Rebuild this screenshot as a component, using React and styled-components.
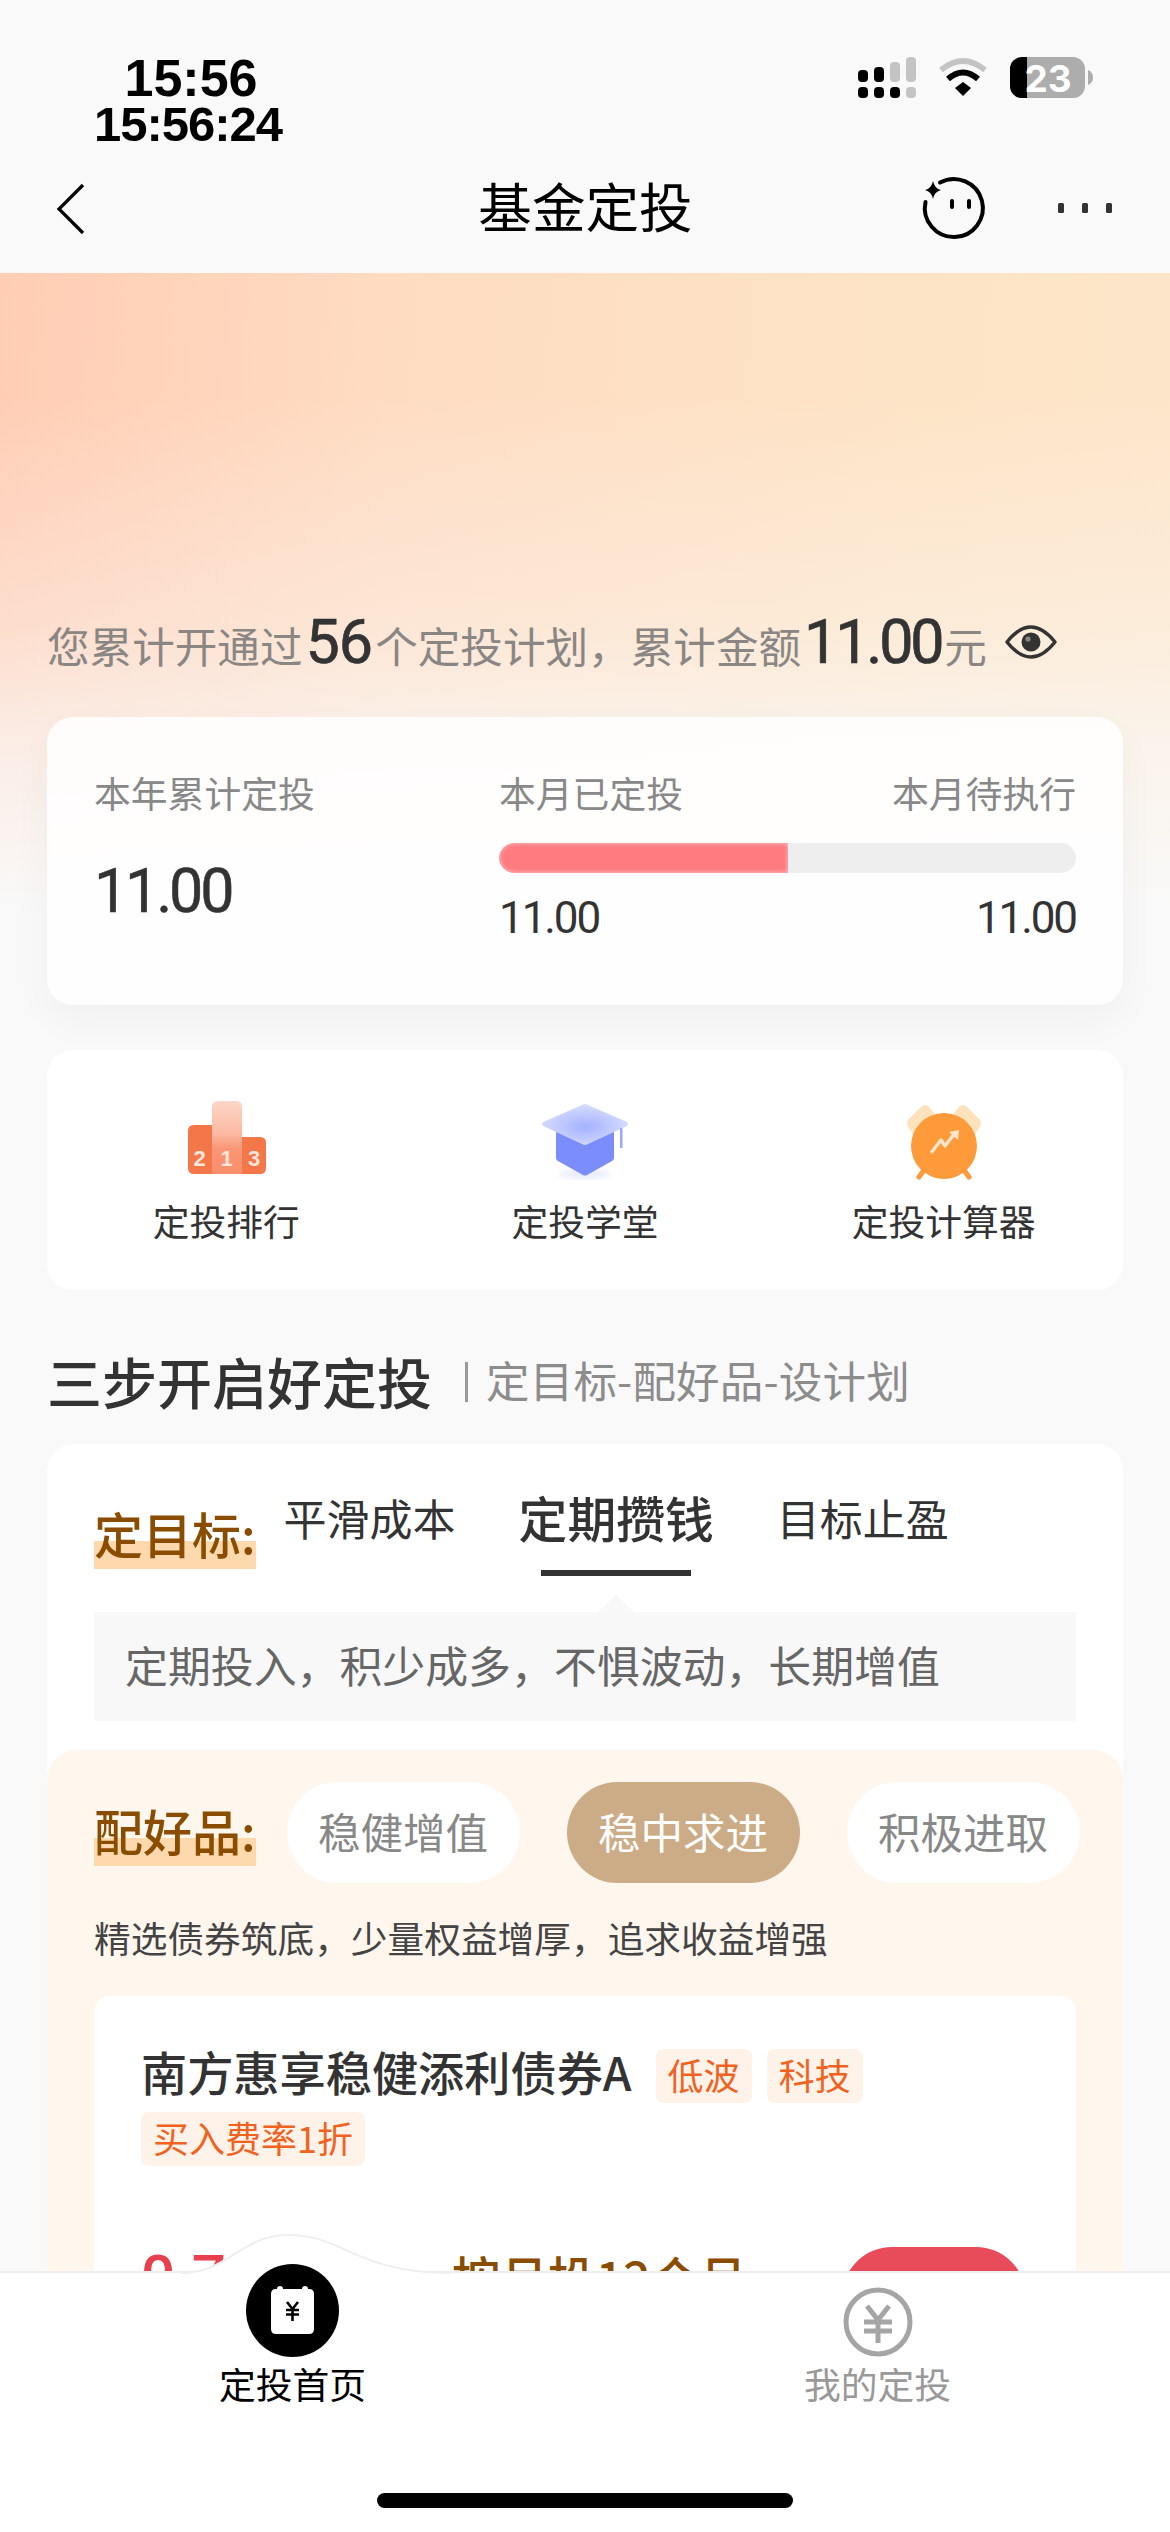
import React from "react";
import styled, { createGlobalStyle } from "styled-components";

const Global = createGlobalStyle`
  html, body { margin: 0; padding: 0; background: #f9f9f9; }
  * { box-sizing: border-box; }
  body { font-family: "Noto Sans CJK SC", "Noto Sans", sans-serif; color: #333; }
`;

const Page = styled.div`
  width: 1170px; height: 2532px; display: flex; flex-direction: column;
  overflow: hidden; background: #f9f9f9;
`;
const StatusBar = styled.div`
  height: 160px; padding: 55px 77px 0 93px; display: flex; justify-content: space-between; align-items: flex-start;
`;
const Clock = styled.div`
  width: 190px; text-align: center; font-family: "Liberation Sans", sans-serif; font-weight: 700; color: #000;
`;
const ClockLine = styled.div`
  font-size: ${p => p.$size}px; letter-spacing: ${p => p.$ls}px; padding-left: ${p => p.$shift}px; line-height: 46px; white-space: nowrap; display: flex; justify-content: center;
`;
const StatusIcons = styled.div`
  display: flex; gap: 22px; align-items: flex-start; margin-top: 2px;
`;
const NavBar = styled.div`
  height: 113px; padding: 0 58px 20px 56px; display: grid; grid-template-columns: 1fr auto 1fr; align-items: center;
`;
const BackSvg = styled.svg`
  display: block; margin-top: 4px;
`;
const NavTitle = styled.div`
  font-size: 53.6px; line-height: 70px; color: #000; font-weight: 400; margin: -3px 0 0 3px;
`;
const NavRight = styled.div`
  display: flex; justify-content: flex-end; align-items: center; gap: 69px; margin-top: 2px;
`;
const Scroll = styled.div`
  flex: 1; min-height: 0; overflow: hidden; padding: 327px 47px 0;
  background:
    linear-gradient(to bottom, rgba(249,249,249,0) 120px, rgba(249,249,249,.35) 350px, rgba(249,249,249,.7) 470px, #f9f9f9 640px),
    linear-gradient(95deg, #ffcdb4 0%, #fedcc2 30%, #fde4c6 70%, #fde6cb 100%);
`;
const Summary = styled.div`
  height: 84px; display: flex; align-items: baseline; font-size: 42.6px; line-height: 84px; color: #8a8684; white-space: nowrap;
`;
const SummaryNum = styled.span`
  font-family: Roboto, sans-serif; font-weight: 400; -webkit-text-stroke: .7px #333; font-size: 61px; color: #333; letter-spacing: ${p => p.$ls}px; margin: 0 3px;
`;
const EyeWrap = styled.span`
  align-self: center; display: flex; margin-left: 18px;
`;
const StatCard = styled.div`
  margin-top: 33px; height: 288px; padding: 48px 47px 0; border-radius: 26px;
  background: rgba(255,255,255,.86); box-shadow: 0 16px 40px rgba(0,0,0,.035);
  display: grid; grid-template-columns: 405px 1fr;
`;
const StatLabel = styled.div`
  font-size: 36.8px; line-height: 54px; color: #888;
`;
const BigValue = styled.div`
  margin-top: 33px; font-family: Roboto, sans-serif; font-weight: 400; -webkit-text-stroke: .5px #333; font-size: 61px; line-height: 78px; letter-spacing: -3.2px; color: #333;
`;
const LabelRow = styled.div`
  display: flex; justify-content: space-between;
`;
const Progress = styled.div`
  margin-top: 24px; height: 30px; border-radius: 15px; background: #eeeeee; overflow: hidden;
`;
const ProgressFill = styled.div`
  height: 100%; background: #ff7b80; border-radius: 15px 0 0 15px; box-shadow: inset 0 0 5px rgba(255,255,255,.6);
`;
const SmallValue = styled.div`
  font-family: Roboto, sans-serif; font-weight: 400; font-size: 44px; line-height: 50px; letter-spacing: -2.1px; color: #333;
`;
const ValueRow = styled(LabelRow)`
  margin-top: 20px;
`;
const ToolCard = styled.div`
  margin-top: 45px; height: 240px; border-radius: 26px; background: #fff; padding-top: 50px;
  display: grid; grid-template-columns: repeat(3, 1fr);
`;
const Tool = styled.div`
  display: flex; flex-direction: column; align-items: center; gap: 13px;
`;
const ToolLabel = styled.div`
  font-size: 36.8px; line-height: 54px; color: #333;
`;
const Heading = styled.div`
  margin-top: 52px; height: 76px; display: flex; align-items: center; white-space: nowrap;
`;
const HeadingTitle = styled.div`
  font-size: 55px; font-weight: 500; color: #333; line-height: 76px;
`;
const HeadingBar = styled.div`
  width: 3px; height: 40px; background: #999; margin: 4px 18px 0 33px;
`;
const HeadingSub = styled.div`
  font-size: 43.5px; color: #8c8c8c; line-height: 76px; letter-spacing: .2px;
`;
const StepCard = styled.div`
  margin-top: 26px; padding-top: 44px; border-radius: 26px 26px 0 0; background: #fff;
`;
const GoalRow = styled.div`
  padding: 0 47px; display: flex; align-items: flex-start;
`;
const StepLabel = styled.div`
  flex: none; margin-top: ${p => p.$top}px; padding-bottom: 8px; font-size: 49px; line-height: 56px; font-weight: 500; color: #8a4d00; white-space: nowrap;
  background: linear-gradient(to top, #ffd9ae 28px, transparent 28px);
`;
const Tabs = styled.div`
  margin-left: 28px; display: flex; gap: 63px;
`;
const Tab = styled.div`
  position: relative; height: 88px; line-height: 58px; white-space: nowrap; display: flex; justify-content: center;
  font-size: ${p => (p.$active ? 48.8 : 43)}px; font-weight: ${p => (p.$active ? 500 : 400)}; color: #333;
  &::after {
    content: ""; position: absolute; left: 50%; bottom: 0; transform: translateX(-50%); width: 150px; height: 6px;
    background: ${p => (p.$active ? "#333" : "transparent")};
  }
`;
const GoalNote = styled.div`
  position: relative; margin: 36px 47px 0; height: 109px; padding-left: 31px; background: #f8f8f8;
  font-size: 42.9px; line-height: 105px; color: #666; white-space: nowrap;
  &::before {
    content: ""; position: absolute; left: 504px; top: -17px; width: 36px; height: 17px; background: #f8f8f8;
    clip-path: polygon(50% 0, 100% 100%, 0 100%);
  }
`;
const ProductPanel = styled.div`
  margin-top: 29px; padding: 32px 47px 0; background: #fff6ee; border-radius: 30px 30px 0 0;
`;
const PickRow = styled.div`
  display: flex; align-items: center;
`;
const Pills = styled.div`
  margin-left: 31px; display: flex; gap: 47px; flex: none;
`;
const Pill = styled.div`
  width: 233px; height: 101px; padding-bottom: 4px; border-radius: 51px; display: flex; align-items: center; justify-content: center;
  font-size: 42.5px; background: ${p => (p.$active ? "#ccab87" : "#fff")}; color: ${p => (p.$active ? "#fff" : "#888")};
`;
const PickNote = styled.div`
  margin-top: 29px; margin-bottom: 1px; font-size: 36.7px; line-height: 50px; color: #444; white-space: nowrap;
`;
const FundCard = styled.div`
  margin-top: 34px; padding: 53px 50px 0 47px; background: #fff; border-radius: 16px;
`;
const FundHead = styled.div`
  display: flex; flex-wrap: wrap; align-items: center; column-gap: 15px; row-gap: 9px;
`;
const FundName = styled.div`
  font-size: 46.2px; line-height: 54px; height: 54px; margin-top: -10px; font-weight: 500; color: #333; margin-right: 9px; white-space: nowrap;
`;
const FundTag = styled.div`
  height: 54px; padding: 0 12px; border-radius: 8px; background: #fff3e9; color: #f0621e;
  font-size: 36px; line-height: 50px; white-space: nowrap;
`;
const FundFoot = styled.div`
  margin-top: 81px; display: flex; align-items: flex-start;
`;
const FundRate = styled.div`
  width: 311px; flex: none; font-family: Roboto, sans-serif; font-size: 60px; line-height: 60px; font-weight: 500; color: #e8404e;
`;
const FundPlan = styled.div`
  font-size: 48px; line-height: 58px; font-weight: 500; color: #8a4d00; white-space: nowrap;
`;
const FundButton = styled.div`
  margin-left: auto; width: 184px; height: 100px; border-radius: 50px; background: #e84b5a; color: #fff;
  font-size: 42px; line-height: 100px; text-align: center;
`;
const TabBar = styled.div`
  position: relative; z-index: 2; height: 261px; flex: none; background: #fff; border-top: 2px solid #eee;
  display: flex; flex-direction: column;
`;
const WaveWrap = styled.div`
  position: absolute; left: 180px; top: -40px; display: flex;
`;
const BarTabs = styled.div`
  position: relative; display: grid; grid-template-columns: 1fr 1fr; margin-top: -9px;
`;
const BarTab = styled.div`
  display: flex; flex-direction: column; align-items: center; gap: 1px;
`;
const BarIcon = styled.div`
  height: 93px; display: flex; align-items: flex-end;
`;
const BarLabel = styled.div`
  font-size: 36.8px; line-height: 50px; color: ${p => (p.$active ? "#000" : "#999")};
`;
const HomeIndicator = styled.div`
  align-self: center; margin-top: 85px; width: 416px; height: 15px; border-radius: 8px; background: #000;
`;

const Signal = () => (
  <svg width="58" height="41" viewBox="0 0 58 41">
    <rect x="0" y="13" width="10" height="12" rx="4" fill="#000" />
    <rect x="16" y="10" width="10" height="15" rx="4" fill="#000" />
    <rect x="32" y="5" width="10" height="20" rx="4" fill="#c4c4c4" />
    <rect x="48" y="0" width="10" height="25" rx="4" fill="#c4c4c4" />
    <rect x="0" y="30" width="10" height="11" rx="4" fill="#000" />
    <rect x="16" y="30" width="10" height="11" rx="4" fill="#000" />
    <rect x="32" y="30" width="10" height="11" rx="4" fill="#000" />
    <rect x="48" y="30" width="10" height="11" rx="4" fill="#c4c4c4" />
  </svg>
);
const Wifi = () => (
  <svg width="50" height="39" viewBox="0 0 50 39">
    <path d="M3 13 Q25 -5 47 13" fill="none" stroke="#c4c4c4" strokeWidth="6" />
    <path d="M10 22 Q25 9 40 22" fill="none" stroke="#000" strokeWidth="6" />
    <polygon points="17,31 25,25 33,31 25,39" fill="#000" />
  </svg>
);
const Battery = () => (
  <svg width="83" height="41" viewBox="0 0 83 41" overflow="visible">
    <defs><clipPath id="bat"><rect width="75" height="41" rx="12" /></clipPath></defs>
    <g clipPath="url(#bat)">
      <rect width="75" height="41" fill="#adadad" />
      <rect width="17" height="41" fill="#000" />
    </g>
    <path d="M78 13 Q83 15 83 20.5 Q83 26 78 28 Z" fill="#adadad" />
    <text x="38" y="35" textAnchor="middle" fontFamily="Inter, sans-serif" fontWeight="700" fontSize="37" fill="#fff">23</text>
  </svg>
);
const Back = () => (
  <BackSvg width="30" height="52" viewBox="0 0 30 52">
    <path d="M27 2 L3 26 L27 50" fill="none" stroke="#000" strokeWidth="3.2" />
  </BackSvg>
);
const Face = () => (
  <svg width="70" height="70" viewBox="0 0 70 70">
    <path d="M21 9.6 A29 29 0 1 1 6.5 29" fill="none" stroke="#000" strokeWidth="4" strokeLinecap="round" />
    <path d="M14 8 Q15.5 15.5 22 17 Q15.5 18.5 14 26 Q12.5 18.5 6 17 Q12.5 15.5 14 8 Z" fill="#000" />
    <rect x="31" y="26" width="4" height="10" rx="2" fill="#000" />
    <rect x="48" y="26" width="4" height="10" rx="2" fill="#000" />
  </svg>
);
const Dots = () => (
  <svg width="54" height="10" viewBox="0 0 54 10">
    <rect x="0" width="6" height="10" rx="1.5" fill="#333" />
    <rect x="24" width="6" height="10" rx="1.5" fill="#333" />
    <rect x="48" width="6" height="10" rx="1.5" fill="#333" />
  </svg>
);
const Eye = () => (
  <svg width="52" height="34" viewBox="0 0 52 34">
    <path d="M2 17 Q14 2 26 2 Q38 2 50 17 Q38 32 26 32 Q14 32 2 17 Z" fill="none" stroke="#333" strokeWidth="3.4" strokeLinejoin="round" />
    <circle cx="26" cy="17" r="9.5" fill="#333" />
    <circle cx="23" cy="14" r="2.6" fill="#8a8684" />
  </svg>
);
const Podium = () => (
  <svg width="80" height="80" viewBox="0 0 80 80">
    <defs>
      <linearGradient id="pod" x1="0" y1="0" x2="0" y2="1">
        <stop offset="0" stopColor="#fdd6c8" />
        <stop offset=".45" stopColor="#fcb9a2" />
        <stop offset=".65" stopColor="#fa9676" />
        <stop offset="1" stopColor="#fb8e6c" />
      </linearGradient>
    </defs>
    <path d="M26 25 H8 Q2 25 2 31 V68 Q2 74 8 74 H26 Z" fill="#f4774a" />
    <path d="M56 37 H74 Q80 37 80 43 V68 Q80 74 74 74 H56 Z" fill="#f4774a" />
    <path d="M26 7 Q26 1 32 1 H50 Q56 1 56 7 V74 H26 Z" fill="url(#pod)" />
    <g fontFamily="Liberation Sans, sans-serif" fontWeight="700" fontSize="22" fill="#ffe6da" textAnchor="middle">
      <text x="13.5" y="66">2</text>
      <text x="40.5" y="66">1</text>
      <text x="68" y="66">3</text>
    </g>
  </svg>
);
const Cap = () => (
  <svg width="90" height="80" viewBox="0 0 90 80">
    <defs>
      <radialGradient id="capg" cx=".5" cy=".55" r=".55">
        <stop offset="0" stopColor="#a4b1ff" />
        <stop offset="1" stopColor="#d8deff" />
      </radialGradient>
      <filter id="capb" x="-30%" y="-30%" width="160%" height="160%"><feGaussianBlur stdDeviation="3" /></filter>
    </defs>
    <ellipse cx="45" cy="74" rx="26" ry="4" fill="#c9d1ff" opacity=".5" filter="url(#capb)" />
    <path d="M16 20 H74 V58 Q74 60 72 61 L47 75 Q45 76 43 75 L18 61 Q16 60 16 58 Z" fill="#7b8cfb" />
    <path d="M42 5 Q45 3 48 5 L87 22 Q89 24 87 26 L48 44 Q45 46 42 44 L3 26 Q1 24 3 22 Z" fill="url(#capg)" />
    <rect x="80" y="28" width="2.5" height="20" fill="#9aa7fb" />
  </svg>
);
const AlarmClock = () => (
  <svg width="76" height="80" viewBox="0 0 76 80">
    <path d="M15 7 Q19 3 23 7 L36 22 L8 34 Q-1 26 2 20 Z" fill="#fde2bc" />
    <path d="M61 7 Q57 3 53 7 L40 22 L68 34 Q77 26 74 20 Z" fill="#fde2bc" />
    <path d="M18 70 L13 77" stroke="#ff9a3a" strokeWidth="5" strokeLinecap="round" />
    <path d="M58 70 L63 77" stroke="#ff9a3a" strokeWidth="5" strokeLinecap="round" />
    <circle cx="38" cy="46" r="33" fill="#ff9a3a" />
    <path d="M25 53 L35 40 L39 46 L49 33" fill="none" stroke="#ffe6cc" strokeWidth="3.4" strokeLinejoin="round" />
    <path d="M43 32 L53 30 L52 40 Z" fill="#ffe6cc" />
  </svg>
);
const Wave = () => (
  <svg width="271" height="42" viewBox="0 0 271 42">
    <path d="M0 40 C50 40 60 2 108 2 C165 2 175 40 271 40 L271 42 L0 42 Z" fill="#fff" />
    <path d="M0 40 C50 40 60 2 108 2 C165 2 175 40 271 40" fill="none" stroke="#eeeeee" strokeWidth="2" />
  </svg>
);
const CalendarBadge = () => (
  <svg width="93" height="93" viewBox="0 0 93 93">
    <circle cx="46.5" cy="46.5" r="46.5" fill="#000" />
    <path d="M25 30 Q25 25 30 25 H63 Q68 25 68 30 V65 Q68 70 63 70 H30 Q25 70 25 65 Z" fill="#fff" />
    <rect x="31" y="22" width="6" height="8" rx="3" fill="#fff" />
    <rect x="56" y="22" width="6" height="8" rx="3" fill="#fff" />
    <path d="M41 38 L46.5 45 L52 38 M40 46 H53 M40 50.5 H53 M46.5 45 V57" fill="none" stroke="#000" strokeWidth="2.6" />
  </svg>
);
const YenCircle = () => (
  <svg width="70" height="70" viewBox="0 0 70 70">
    <circle cx="35" cy="35" r="32" fill="none" stroke="#a5a5a5" strokeWidth="5" />
    <path d="M24 19 L35 33 L46 19 M21 35 H49 M21 44 H49 M35 33 V56" fill="none" stroke="#a5a5a5" strokeWidth="5" />
  </svg>
);

export default function App() {
  return (
    <Page>
      <Global />
      <StatusBar>
        <Clock>
          <ClockLine $size={52} $ls={0} $shift={6}>15:56</ClockLine>
          <ClockLine $size={49} $ls={-1} $shift={0}>15:56:24</ClockLine>
        </Clock>
        <StatusIcons>
          <Signal />
          <Wifi />
          <Battery />
        </StatusIcons>
      </StatusBar>
      <NavBar>
        <Back />
        <NavTitle>基金定投</NavTitle>
        <NavRight>
          <Face />
          <Dots />
        </NavRight>
      </NavBar>
      <Scroll>
        <Summary>
          您累计开通过<SummaryNum $ls={-1}>56</SummaryNum>个定投计划，累计金额<SummaryNum $ls={-3.2}>11.00</SummaryNum>元
          <EyeWrap><Eye /></EyeWrap>
        </Summary>
        <StatCard>
          <div>
            <StatLabel>本年累计定投</StatLabel>
            <BigValue>11.00</BigValue>
          </div>
          <div>
            <LabelRow>
              <StatLabel>本月已定投</StatLabel>
              <StatLabel>本月待执行</StatLabel>
            </LabelRow>
            <Progress><ProgressFill style={{ width: "50%" }} /></Progress>
            <ValueRow>
              <SmallValue>11.00</SmallValue>
              <SmallValue>11.00</SmallValue>
            </ValueRow>
          </div>
        </StatCard>
        <ToolCard>
          <Tool><Podium /><ToolLabel>定投排行</ToolLabel></Tool>
          <Tool><Cap /><ToolLabel>定投学堂</ToolLabel></Tool>
          <Tool><AlarmClock /><ToolLabel>定投计算器</ToolLabel></Tool>
        </ToolCard>
        <Heading>
          <HeadingTitle>三步开启好定投</HeadingTitle>
          <HeadingBar />
          <HeadingSub>定目标-配好品-设计划</HeadingSub>
        </Heading>
        <StepCard>
          <GoalRow>
            <StepLabel $top={17}>定目标:</StepLabel>
            <Tabs>
              <Tab>平滑成本</Tab>
              <Tab $active>定期攒钱</Tab>
              <Tab>目标止盈</Tab>
            </Tabs>
          </GoalRow>
          <GoalNote>定期投入，积少成多，不惧波动，长期增值</GoalNote>
          <ProductPanel>
            <PickRow>
              <StepLabel $top={3}>配好品:</StepLabel>
              <Pills>
                <Pill>稳健增值</Pill>
                <Pill $active>稳中求进</Pill>
                <Pill>积极进取</Pill>
              </Pills>
            </PickRow>
            <PickNote>精选债券筑底，少量权益增厚，追求收益增强</PickNote>
            <FundCard>
              <FundHead>
                <FundName>南方惠享稳健添利债券A</FundName>
                <FundTag>低波</FundTag>
                <FundTag>科技</FundTag>
                <FundTag>买入费率1折</FundTag>
              </FundHead>
              <FundFoot>
                <FundRate>0.75%</FundRate>
                <FundPlan>按月投12个月</FundPlan>
                <FundButton>定投</FundButton>
              </FundFoot>
            </FundCard>
          </ProductPanel>
        </StepCard>
      </Scroll>
      <TabBar>
        <WaveWrap><Wave /></WaveWrap>
        <BarTabs>
          <BarTab>
            <BarIcon><CalendarBadge /></BarIcon>
            <BarLabel $active>定投首页</BarLabel>
          </BarTab>
          <BarTab>
            <BarIcon><YenCircle /></BarIcon>
            <BarLabel>我的定投</BarLabel>
          </BarTab>
        </BarTabs>
        <HomeIndicator />
      </TabBar>
    </Page>
  );
}
